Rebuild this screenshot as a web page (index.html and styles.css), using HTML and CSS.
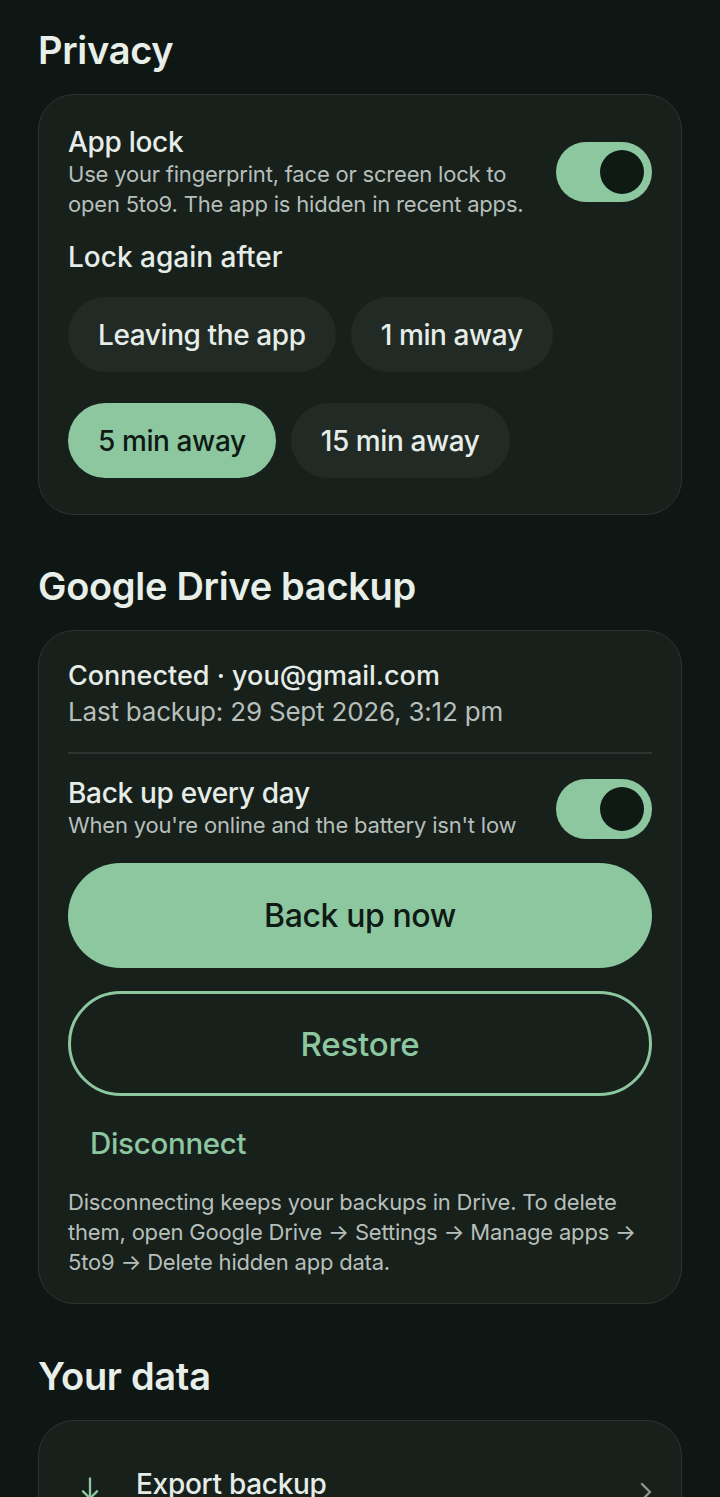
FILE: index.html
```html
<!DOCTYPE html>
<html lang="en">
<head>
    <meta charset="UTF-8">
    <title>Settings</title>
    <link rel="stylesheet" href="styles.css">
</head>
<body>
    <div class="page">
        <h2 class="section-title">Privacy</h2>
        <div class="card">
            <div class="setting-row">
                <div class="setting-text">
                    <div class="setting-name">App lock</div>
                    <div class="setting-desc">Use your fingerprint, face or screen lock to open 5to9. The app is hidden in recent apps.</div>
                </div>
                <div class="toggle on"><span class="knob"></span></div>
            </div>
            <div class="sub-title">Lock again after</div>
            <div class="chips">
                <span class="chip">Leaving the app</span>
                <span class="chip">1 min away</span>
                <span class="chip active">5 min away</span>
                <span class="chip">15 min away</span>
            </div>
        </div>

        <h2 class="section-title">Google Drive backup</h2>
        <div class="card backup">
            <div class="account">Connected · you@gmail.com</div>
            <div class="last-backup">Last backup: 29 Sept 2026, 3:12 pm</div>
            <div class="divider"></div>
            <div class="setting-row daily">
                <div class="setting-text">
                    <div class="setting-name">Back up every day</div>
                    <div class="setting-desc small">When you're online and the battery isn't low</div>
                </div>
                <div class="toggle on"><span class="knob"></span></div>
            </div>
            <button class="btn primary">Back up now</button>
            <button class="btn outline">Restore</button>
            <button class="btn text">Disconnect</button>
            <p class="note">Disconnecting keeps your backups in Drive. To delete them, open Google Drive → Settings → Manage apps → 5to9 → Delete hidden app data.</p>
        </div>

        <h2 class="section-title">Your data</h2>
        <div class="card list">
            <div class="list-row">
                <svg class="row-icon" width="28" height="28" viewBox="0 0 24 24" fill="none" stroke="#8cc7a0" stroke-width="2" stroke-linecap="round" stroke-linejoin="round">
                    <path d="M12 3v17"/>
                    <path d="M6 14l6 6 6-6"/>
                </svg>
                <span class="row-label">Export backup</span>
                <svg class="chevron" width="20" height="28" viewBox="0 0 20 28" fill="none" stroke="#8b948f" stroke-width="2.4" stroke-linecap="round" stroke-linejoin="round">
                    <path d="M10 6l8 8-8 8"/>
                </svg>
            </div>
        </div>
    </div>
</body>
</html>
```

FILE: styles.css
```css
*{
    margin:0;
    padding:0;
    box-sizing:border-box;
}
body{
    background:#0f1714;
    color:#e6ede8;
    font-family:Inter,"Noto Sans",sans-serif;
    height:1497px;
    overflow:hidden;
}
.page{
    padding:24px 38px 0;
}
.section-title{
    font-size:38px;
    font-weight:600;
    letter-spacing:-0.3px;
    line-height:52px;
    color:#e8efe9;
    margin-bottom:18px;
}
.card{
    background:#18201c;
    border:1.5px solid #2b3430;
    border-radius:36px;
    padding:30px 29px 36px;
    margin-bottom:45px;
}
.card.backup{
    padding-bottom:26px;
    margin-bottom:46px;
}
.setting-row{
    display:flex;
    align-items:center;
    justify-content:space-between;
    gap:20px;
}
.setting-name{
    font-size:28px;
    font-weight:500;
    letter-spacing:-0.3px;
    line-height:34px;
}
.setting-desc{
    font-size:22px;
    color:#b6bfba;
    line-height:30px;
    letter-spacing:-0.2px;
}
.daily{
    margin-top:2px;
}
.setting-desc.small{
    font-size:22px;
    line-height:31px;
}
.toggle{
    flex:none;
    width:96px;
    height:60px;
    border-radius:30px;
    background:#8cc7a0;
    display:flex;
    align-items:center;
    justify-content:flex-end;
    padding-right:8px;
}
.knob{
    width:44px;
    height:44px;
    border-radius:50%;
    background:#0f1a14;
}
.sub-title{
    font-size:28px;
    font-weight:500;
    letter-spacing:0;
    margin-top:18px;
    line-height:40px;
}
.chips{
    display:flex;
    flex-wrap:wrap;
    gap:31px 15px;
    margin-top:20px;
    width:520px;
}
.chip{
    height:75px;
    border-radius:38px;
    background:#212a25;
    padding:0 30px;
    display:flex;
    align-items:center;
    font-size:28px;
    font-weight:500;
    letter-spacing:-0.4px;
    color:#e6ede8;
}
.chip.active{
    background:#8cc7a0;
    color:#0f1a14;
}
.account{
    font-size:27px;
    font-weight:500;
    letter-spacing:0;
    line-height:34px;
    margin-top:-2px;
}
.last-backup{
    font-size:26px;
    color:#b6bfba;
    line-height:38px;
    letter-spacing:-0.2px;
}
.divider{
    height:2px;
    background:#2b3430;
    margin:21px 0 22px;
}
.btn{
    display:block;
    width:100%;
    border:none;
    font-family:inherit;
    cursor:pointer;
    background:none;
}
.btn.primary{
    height:105px;
    border-radius:53px;
    background:#8cc7a0;
    color:#0f1a14;
    font-size:32px;
    font-weight:500;
    letter-spacing:-0.4px;
    margin-top:22px;
}
.btn.outline{
    height:105px;
    border-radius:53px;
    border:3px solid #8cc7a0;
    color:#8cc7a0;
    font-size:33px;
    font-weight:500;
    letter-spacing:-0.2px;
    margin-top:23px;
}
.btn.text{
    width:auto;
    color:#8cc7a0;
    font-size:29.5px;
    font-weight:500;
    letter-spacing:-0.3px;
    padding:0 22px;
    height:60px;
    margin-top:17px;
}
.note{
    font-size:22px;
    line-height:30px;
    color:#b6bfba;
    letter-spacing:-0.2px;
    margin-top:14px;
}
.card.list{
    padding:45px 29px 34px;
}
.list-row{
    display:flex;
    align-items:flex-start;
    gap:32px;
    padding-left:8px;
}
.row-icon{
    flex:none;
    margin-top:9px;
}
.chevron{
    flex:none;
    margin-top:12px;
}
.row-label{
    flex:1;
    font-size:28px;
    font-weight:500;
    letter-spacing:-0.3px;
    line-height:36px;
}
```
